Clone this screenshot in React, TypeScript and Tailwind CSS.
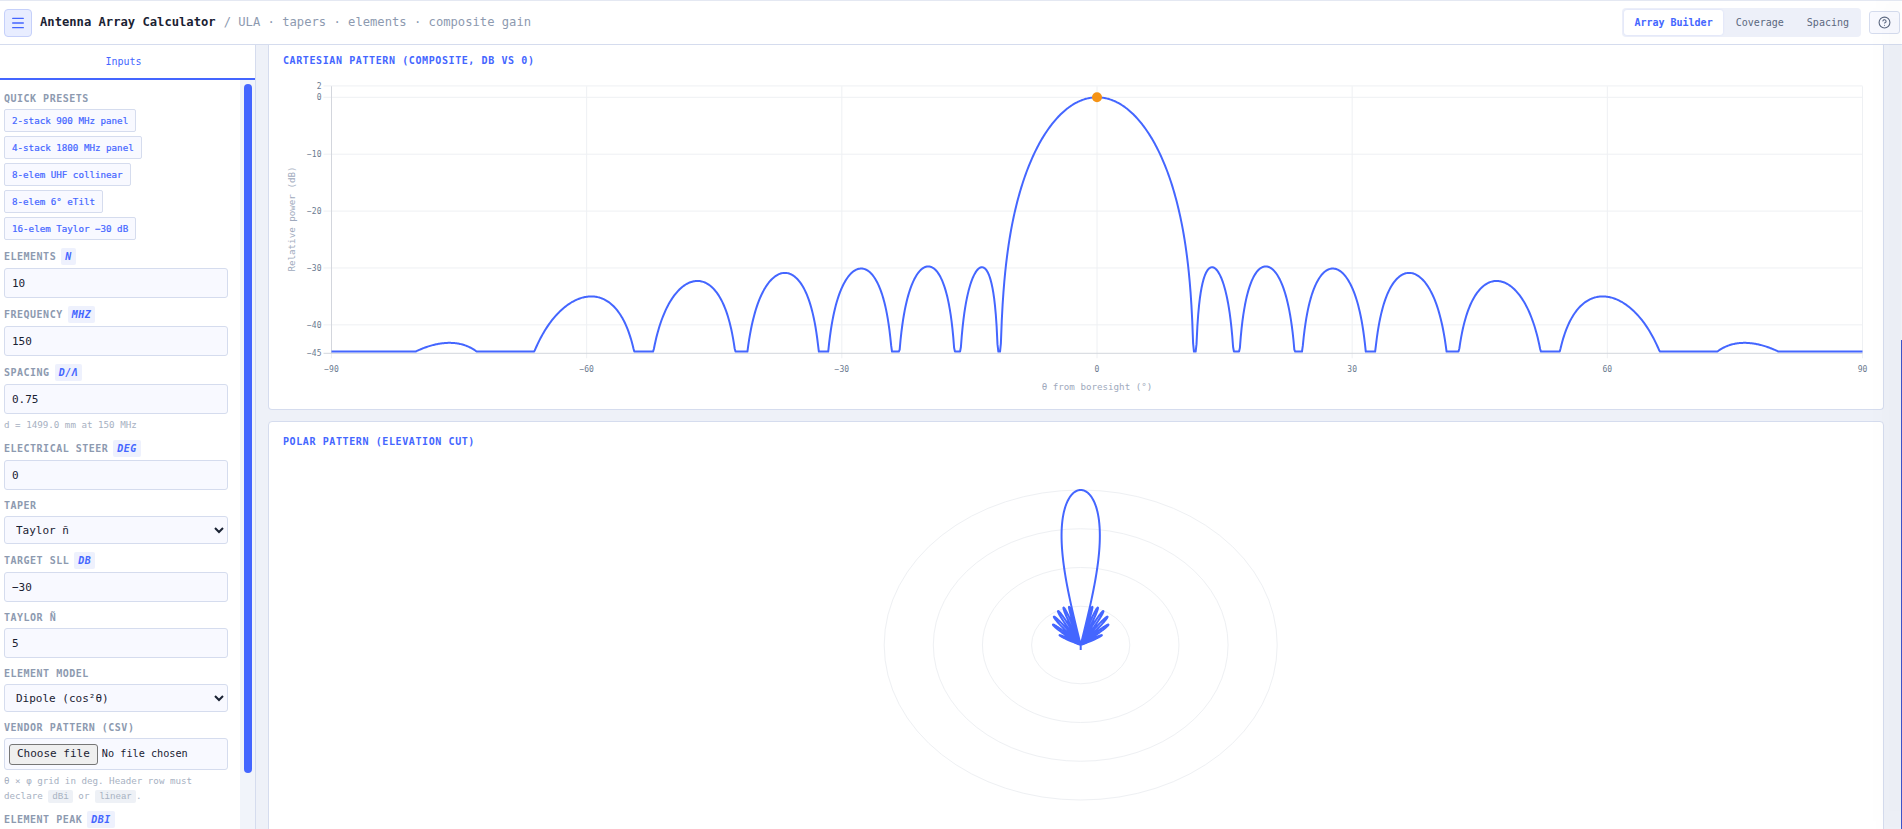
import * as React from "react";
import { CircleHelp, Menu } from "lucide-react";

const MONO = "font-['DejaVu_Sans_Mono','Liberation_Mono',monospace]";

const fact = (n: number): number => (n <= 1 ? 1 : n * fact(n - 1));

// Taylor n-bar weights for a ULA
const taylorWeights = (count: number, sll: number, nbar: number) => {
  const A = Math.acosh(Math.pow(10, -sll / 20)) / Math.PI;
  const sigma2 = (nbar * nbar) / (A * A + (nbar - 0.5) * (nbar - 0.5));
  const coeffs: number[] = [];
  for (let m = 1; m < nbar; m++) {
    let prod = 1;
    for (let n = 1; n < nbar; n++) {
      const z2 = sigma2 * (A * A + (n - 0.5) * (n - 0.5));
      prod *= 1 - (m * m) / z2;
    }
    coeffs.push(
      ((fact(nbar - 1) * fact(nbar - 1)) / (fact(nbar - 1 + m) * fact(nbar - 1 - m))) * prod
    );
  }
  const weights: number[] = [];
  for (let k = 0; k < count; k++) {
    const x = (k - (count - 1) / 2) / count;
    let w = 1;
    coeffs.forEach((f, i) => {
      w += 2 * f * Math.cos(2 * Math.PI * (i + 1) * x);
    });
    weights.push(w);
  }
  return weights;
};

const WEIGHTS = taylorWeights(10, -30, 5);
const WEIGHT_SUM = WEIGHTS.reduce((a, b) => a + b, 0);

const patternDb = (deg: number) => {
  const t = (deg * Math.PI) / 180;
  const psi = 2 * Math.PI * 0.75 * Math.sin(t);
  let re = 0;
  let im = 0;
  WEIGHTS.forEach((w, k) => {
    re += w * Math.cos(psi * k);
    im += w * Math.sin(psi * k);
  });
  const af = (re * re + im * im) / (WEIGHT_SUM * WEIGHT_SUM);
  const el = Math.cos(t) * Math.cos(t);
  return 10 * Math.log10(Math.max(af * el, 1e-12));
};

const ANGLES: number[] = [];
for (let d = -90; d <= 90.001; d += 0.1) ANGLES.push(d);

// cartesian plot box, in svg px
const PL = 62.5;
const PR = 1593.5;
const PT = 18.3;
const Y0 = 29.3;
const PB = 285.3;
const xOf = (deg: number) => PL + ((deg + 90) / 180) * (PR - PL);
const yOf = (db: number) => Y0 - db * ((PB - Y0) / 45);

const cartPath = ANGLES.map((d, i) => {
  const db = Math.max(patternDb(d), -44.7);
  return `${i === 0 ? "M" : "L"}${xOf(d).toFixed(2)} ${yOf(db).toFixed(2)}`;
}).join(" ");

// polar plot
const CX = 811.7;
const CY = 196;
const RX = 196.5;
const RY = 155;
const polarPath =
  ANGLES.map((d, i) => {
    const r = Math.max((patternDb(d) + 40) / 40, 0);
    const t = (d * Math.PI) / 180;
    return `${i === 0 ? "M" : "L"}${(CX + r * RX * Math.sin(t)).toFixed(2)} ${(CY - r * RY * Math.cos(t)).toFixed(2)}`;
  }).join(" ") + ` M${CX} ${CY} L${CX} ${CY + 5}`;

const PRESETS = [
  "2-stack 900 MHz panel",
  "4-stack 1800 MHz panel",
  "8-elem UHF collinear",
  "8-elem 6° eTilt",
  "16-elem Taylor −30 dB",
];

const tickText = (n: number) => (n < 0 ? `−${-n}` : `${n}`);

const Label = ({ text, unit }: { text: string; unit?: string }) => (
  <div className="flex items-center gap-[5px] mb-[3px] text-[10px] leading-[15px] font-bold tracking-[0.05em] text-[#8d9ab0]">
    <span>{text}</span>
    {unit && (
      <span className="bg-[#eef1fd] text-[#4466ff] italic rounded-[2px] px-1 h-[17px] leading-[17px]">
        {unit}
      </span>
    )}
  </div>
);

const TextField = ({ label, unit, value }: { label: string; unit?: string; value: string }) => (
  <div className="mb-2">
    <Label text={label} unit={unit} />
    <input
      readOnly
      value={value}
      className="block w-full h-[30px] px-[7px] bg-[#f8f9ff] border border-[#d5dcee] rounded-[3px] text-[11px] text-[#1a2233] outline-none"
    />
  </div>
);

const SelectField = ({ label, value }: { label: string; value: string }) => (
  <div className="mb-2">
    <Label text={label} />
    <select
      value={value}
      onChange={() => {}}
      className="block w-full h-[28px] px-[7px] bg-[#f8f9ff] border border-[#d5dcee] rounded-[3px] text-[11px] text-[#1a2233] outline-none"
    >
      <option>{value}</option>
    </select>
  </div>
);

const Hint = ({ children }: { children: React.ReactNode }) => (
  <div className="mt-[3px] text-[9.2px] leading-[15px] text-[#a7b1c2]">{children}</div>
);

const Chip = ({ children }: { children: React.ReactNode }) => (
  <code className="inline-block bg-[#eef1f6] rounded-[2px] px-1 leading-[13px]">{children}</code>
);

const Sidebar = () => (
  <aside className="w-[256px] shrink-0 flex flex-col bg-white border-r border-[#d5dcee] min-h-0">
    <div className="h-[35px] shrink-0 pr-2 flex items-center justify-center border-b-2 border-[#4466ff] text-[10px] text-[#4466ff]">
      Inputs
    </div>
    <div className="flex-1 min-h-0 flex">
      <div className="flex-1 min-w-0 overflow-hidden pt-[11px] pl-1 pr-3">
        <div className="mb-2">
          <Label text="QUICK PRESETS" />
          <div className="flex flex-col items-start gap-1">
            {PRESETS.map((p) => (
              <button
                key={p}
                className="h-[23px] px-[7px] bg-[#f8f9ff] border border-[#d5dcee] rounded-[2px] text-[9.2px] text-[#4466ff] [-webkit-text-stroke:0.2px_#4466ff]"
              >
                {p}
              </button>
            ))}
          </div>
        </div>
        <TextField label="ELEMENTS" unit="N" value="10" />
        <TextField label="FREQUENCY" unit="MHZ" value="150" />
        <div className="mb-2">
          <Label text="SPACING" unit="D/Λ" />
          <input
            readOnly
            value="0.75"
            className="block w-full h-[30px] px-[7px] bg-[#f8f9ff] border border-[#d5dcee] rounded-[3px] text-[11px] text-[#1a2233] outline-none"
          />
          <Hint>d = 1499.0 mm at 150 MHz</Hint>
        </div>
        <TextField label="ELECTRICAL STEER" unit="DEG" value="0" />
        <SelectField label="TAPER" value="Taylor ñ" />
        <TextField label="TARGET SLL" unit="DB" value="−30" />
        <TextField label="TAYLOR Ñ" value="5" />
        <SelectField label="ELEMENT MODEL" value="Dipole (cos²θ)" />
        <div className="mb-2">
          <Label text="VENDOR PATTERN (CSV)" />
          <div className="flex items-center h-[32px] p-1 bg-[#f8f9ff] border border-[#d5dcee] rounded-[3px] text-[10.2px] text-[#1a2233]">
            <button className="h-[21px] px-[7px] mr-1 bg-[#efefef] border border-[#767676] rounded-[3px] text-[11px]">
              Choose file
            </button>
            <span>No file chosen</span>
          </div>
          <Hint>
            <div>θ × φ grid in deg. Header row must</div>
            <div>
              declare <Chip>dBi</Chip> or <Chip>linear</Chip>.
            </div>
          </Hint>
        </div>
        <TextField label="ELEMENT PEAK" unit="DBI" value="2.15" />
      </div>
      {/* scrollbar rail */}
      <div className="w-[15px] shrink-0 bg-[#f1f4fa] pt-1 pl-1 pr-[3px]">
        <div className="h-[689px] bg-[#4466ff] rounded-[4px]" />
      </div>
    </div>
  </aside>
);

const TICK_CLS = "fill-[#6b7a90] text-[8px]";

const CartesianChart = () => (
  <svg viewBox="0 0 1614 341" className="block w-full h-[341px]">
    {[2, 0, -10, -20, -30, -40].map((db) => (
      <g key={db}>
        <line x1={PL - 8} x2={PR} y1={yOf(db)} y2={yOf(db)} stroke="#eef0f3" />
        <text x={PL - 10} y={yOf(db) + 3} textAnchor="end" className={TICK_CLS}>
          {tickText(db)}
        </text>
      </g>
    ))}
    <text x={PL - 10} y={PB + 3} textAnchor="end" className={TICK_CLS}>
      {tickText(-45)}
    </text>
    {[-90, -60, -30, 0, 30, 60, 90].map((deg) => (
      <g key={deg}>
        <line x1={xOf(deg)} x2={xOf(deg)} y1={PT} y2={PB + 5} stroke="#eef0f3" />
        <text x={xOf(deg)} y={PB + 19} textAnchor="middle" className={TICK_CLS}>
          {tickText(deg)}
        </text>
      </g>
    ))}
    <line x1={PL} x2={PL} y1={PT} y2={PB} stroke="#d3d6dd" />
    <line x1={PL - 8} x2={PR} y1={PB} y2={PB} stroke="#d3d6dd" />
    <path d={cartPath} fill="none" stroke="#4466ff" strokeWidth={2} strokeLinejoin="round" />
    <circle cx={xOf(0)} cy={Y0} r={5} fill="#f59316" />
    <text x={xOf(0)} y={322} textAnchor="middle" className="fill-[#a0aabd] text-[9.2px]">
      θ from boresight (°)
    </text>
    <text
      x={0}
      y={0}
      textAnchor="middle"
      transform="translate(26 151) rotate(-90)"
      className="fill-[#a0aabd] text-[9.2px]"
    >
      Relative power (dB)
    </text>
  </svg>
);

const PolarChart = () => (
  <svg viewBox="0 0 1614 400" className="block w-full h-[400px]">
    {[1, 0.75, 0.5, 0.25].map((f) => (
      <ellipse key={f} cx={CX} cy={CY} rx={RX * f} ry={RY * f} fill="none" stroke="#eef0f3" />
    ))}
    <path d={polarPath} fill="none" stroke="#4466ff" strokeWidth={2} strokeLinejoin="round" />
  </svg>
);

const Title = ({ children }: { children: React.ReactNode }) => (
  <div className="px-[14px] text-[10px] leading-[15px] font-bold tracking-[0.06em] text-[#4466ff]">
    {children}
  </div>
);

const Header = () => (
  <header className="h-[45px] shrink-0 flex items-center justify-between bg-white border-t border-b border-t-[#e4e8f2] border-b-[#d5dcee] pl-1 pr-[2px]">
    <div className="flex items-center">
      <button className="w-[28px] h-[28px] flex items-center justify-center bg-[#e8edff] border border-[#c5d0fa] rounded-[4px] text-[#4466ff]">
        <Menu size={16} strokeWidth={2} />
      </button>
      <span className="ml-2 text-[12.16px] font-bold text-[#1a2233]">Antenna Array Calculator</span>
      <span className="ml-2 text-[12.16px] text-[#8d9ab0]">/ ULA · tapers · elements · composite gain</span>
    </div>
    <div className="flex items-center gap-2">
      <div className="flex items-center gap-[3px] p-[2px] bg-[#edf0f9] rounded-[4px]">
        <button className="h-[25px] px-[10px] bg-white rounded-[3px] text-[10px] font-bold text-[#4466ff] shadow-[0_0_2px_rgba(68,102,255,0.15)]">
          Array Builder
        </button>
        <button className="h-[25px] px-[10px] text-[10px] text-[#5b6880]">Coverage</button>
        <button className="h-[25px] px-[10px] text-[10px] text-[#5b6880]">Spacing</button>
      </div>
      <button className="w-[31px] h-[23px] flex items-center justify-center bg-[#f8f9ff] border border-[#d5dcee] rounded-[3px] text-[#5b6880]">
        <CircleHelp size={13} />
      </button>
    </div>
  </header>
);

export default function App() {
  return (
    <div className={`${MONO} relative h-screen flex flex-col overflow-hidden bg-white`}>
      <Header />
      <div className="flex-1 min-h-0 flex">
        <Sidebar />
        <main className="flex-1 min-w-0 overflow-hidden bg-[#eef1f8] pl-3 pr-[18px] flex flex-col gap-[11px]">
          <section className="shrink-0 bg-white border border-t-0 border-[#d5dcee] rounded-b-[4px] pt-2">
            <Title>CARTESIAN PATTERN (COMPOSITE, DB VS 0)</Title>
            <CartesianChart />
          </section>
          <section className="shrink-0 bg-white border border-[#d5dcee] rounded-[4px] pt-3">
            <Title>POLAR PATTERN (ELEVATION CUT)</Title>
            <PolarChart />
          </section>
        </main>
      </div>
      {/* edge of the off-canvas drawer, only its shadow and one pixel show */}
      <div className="absolute top-0 right-0 bottom-0 w-px shadow-[-6px_0_24px_rgba(15,23,42,0.35)]">
        <div className="mt-[340px] h-[489px] bg-[#3d54c8]" />
      </div>
    </div>
  );
}
